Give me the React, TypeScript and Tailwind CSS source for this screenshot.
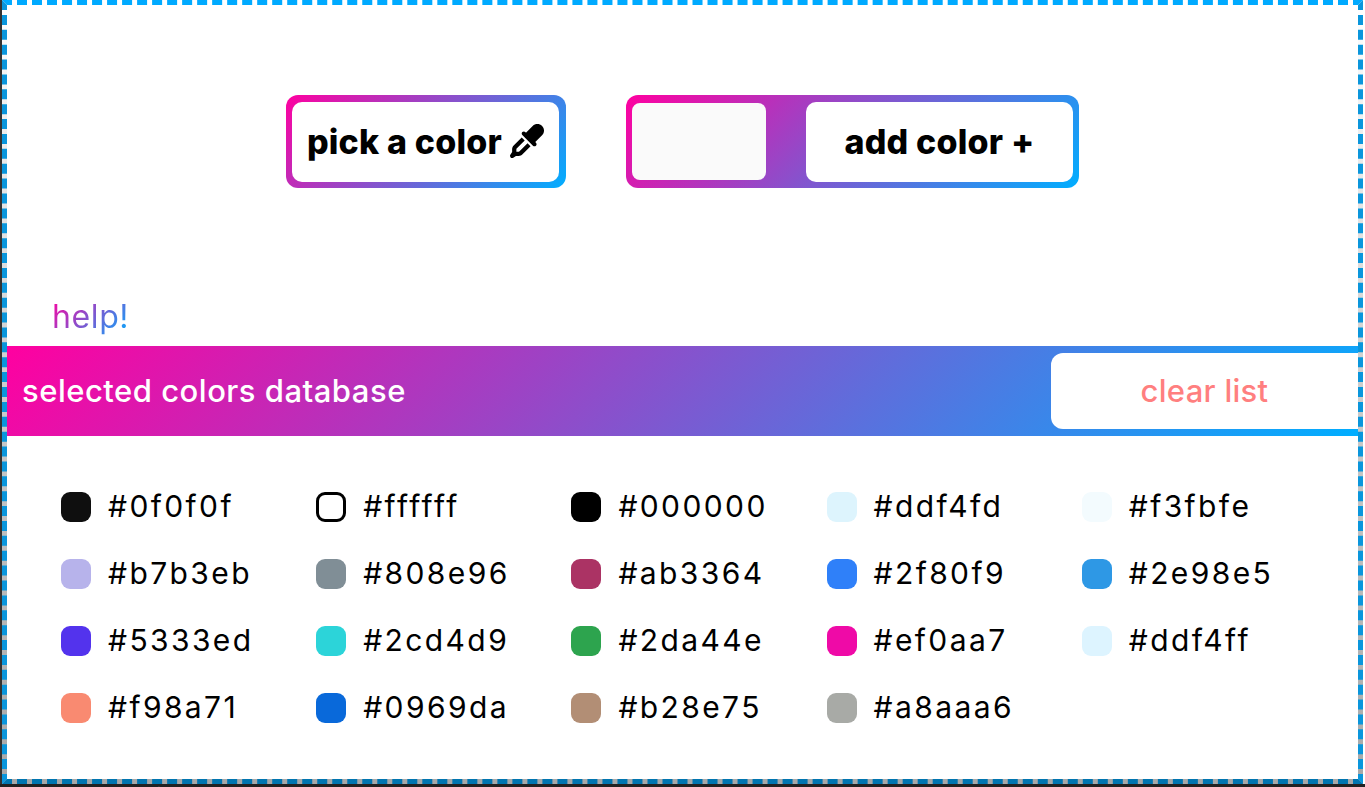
import { FaEyeDropper } from "react-icons/fa6"

const colors = [
  { hex: "#0f0f0f" },
  { hex: "#ffffff", outline: true },
  { hex: "#000000" },
  { hex: "#ddf4fd" },
  { hex: "#f3fbfe" },
  { hex: "#b7b3eb" },
  { hex: "#808e96" },
  { hex: "#ab3364" },
  { hex: "#2f80f9" },
  { hex: "#2e98e5" },
  { hex: "#5333ed" },
  { hex: "#2cd4d9" },
  { hex: "#2da44e" },
  { hex: "#ef0aa7" },
  { hex: "#ddf4ff" },
  { hex: "#f98a71" },
  { hex: "#0969da" },
  { hex: "#b28e75" },
  { hex: "#a8aaa6" },
]

const gradient = "bg-[linear-gradient(135deg,#ff00a0,#00aeff)]"

function Swatch({ hex, outline }: { hex: string; outline?: boolean }) {
  return (
    <div className="flex h-[67px] w-[255.2px] items-center">
      <span
        className={
          "h-[30px] w-[30px] rounded-[9px] " +
          (outline ? "border-[3px] border-black" : "")
        }
        style={{ backgroundColor: hex }}
      />
      <span className="ml-[17px] text-[30px] font-normal tracking-[2.4px] text-black">
        {hex}
      </span>
    </div>
  )
}

export default function App() {
  return (
    <div className="h-[787px] w-[1365px] overflow-hidden bg-[#222] font-['Inter',sans-serif]">
      <div className="flex h-[784px] bg-white">
        <div className="w-[2px] bg-[#333]" />
        <div className="h-[784px] w-[1361px] bg-[linear-gradient(to_bottom,#ffffff,#cccccc_50%,#a8a8a8)]">
          <div className="flex h-full flex-col border-[5px] border-dashed border-t-[#00aaff] border-r-[#0a96dc] border-b-[#0075b0] border-l-[#0a96dc] bg-white bg-clip-padding">
            <div className="mt-[90px] ml-[279px] flex h-[93px] items-stretch gap-[60px]">
              <button
                type="button"
                className={"flex w-[280px] rounded-[12px] pt-[7px] pr-[7px] pb-[6px] pl-[6px] " + gradient}
              >
                <span className="flex flex-1 items-center justify-center gap-[8px] rounded-[10px] bg-white pb-[2px] text-[34px] font-extrabold tracking-[0.2px] text-black">
                  pick a color
                  <FaEyeDropper className="h-[34px] w-[34px]" />
                </span>
              </button>
              <div className={"flex w-[453px] items-center rounded-[12px] pr-[6px] pl-[6px] " + gradient}>
                <div className="h-[77px] w-[134px] rounded-[8px] bg-[#fafafa]" />
                <button
                  type="button"
                  className="ml-[40px] flex h-[80px] flex-1 items-center justify-center rounded-[10px] bg-white text-[34px] font-extrabold tracking-[0.2px] text-black"
                >
                  add color +
                </button>
              </div>
            </div>

            <div className="mt-[106px] ml-[45px] h-[52px]">
              <span className={"bg-clip-text text-[32px] leading-[45px] tracking-[0.6px] text-transparent " + gradient}>
                help!
              </span>
            </div>

            <div className={"flex h-[90px] items-center justify-between " + gradient}>
              <span className="ml-[15px] text-[31px] font-medium tracking-[0.5px] text-white">
                selected colors database
              </span>
              <button
                type="button"
                className="h-[76px] w-[307px] rounded-l-[12px] bg-white text-[31px] font-medium tracking-[0.3px] text-[#ff7f7f]"
              >
                clear list
              </button>
            </div>

            <div className="mt-[37px] ml-[54px] flex flex-wrap">
              {colors.map((c) => (
                <Swatch key={c.hex} hex={c.hex} outline={c.outline} />
              ))}
            </div>
          </div>
        </div>
      </div>
      {/* page text showing under the panel, only its top edge is visible */}
      <div className="ml-[6px] h-[3px] overflow-hidden text-[30px] leading-[30px] text-[#999]">
        smook option
      </div>
    </div>
  )
}
